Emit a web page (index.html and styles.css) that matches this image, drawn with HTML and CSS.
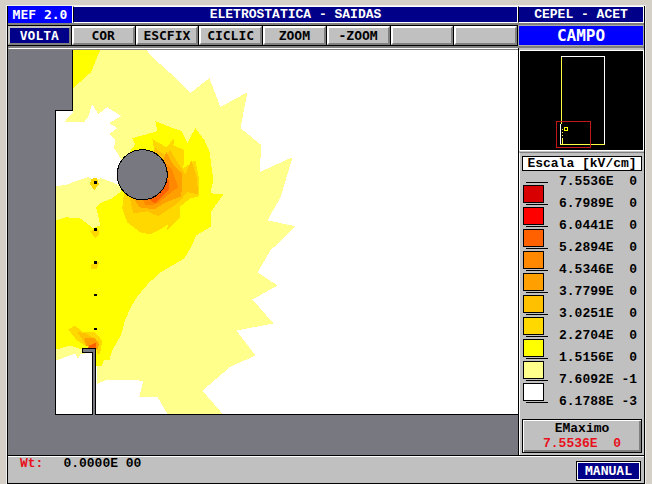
FILE: index.html
```html
<!DOCTYPE html>
<html lang="pt">
<head>
<meta charset="utf-8">
<title>MEF 2.0</title>
<link rel="stylesheet" href="styles.css">
</head>
<body>
<main class="app">
  <header class="header">
    <div class="brand">MEF 2.0</div>
    <h1 class="title">ELETROSTATICA - SAIDAS</h1>
    <div class="owner">CEPEL - ACET</div>
  </header>
  <div class="bar">
    <nav class="tools" aria-label="Menu">
      <button class="tool tool-active" type="button">VOLTA</button>
      <button class="tool" type="button">COR</button>
      <button class="tool" type="button">ESCFIX</button>
      <button class="tool" type="button">CICLIC</button>
      <button class="tool" type="button">ZOOM</button>
      <button class="tool" type="button">-ZOOM</button>
      <button class="tool" type="button"></button>
      <button class="tool" type="button"></button>
    </nav>
    <h2 class="mode">CAMPO</h2>
  </div>
  <div class="work">
    <section class="plot">
      <svg class="field" viewBox="9 50 508 404" shape-rendering="crispEdges">
        <rect x="9" y="50" width="508" height="404" fill="#787880"/>
        <path fill="#fff" d="M73 50H517V413H56V111H73Z"/>
        <path fill="#ffff8c" d="M73 50H146L152 57 172 75 190 93 209 78 220 107 247 92 240 128 261 145 259 172 292 157 280 197 267 220 295 226 270 250 257 272 277 285 252 299 273 323 236 330 255 355 230 366 202 390 222 413H167L157 396 139 396 143 380 107 379 97 383V351H93L80 354 78 358 75 353 56 360V186L68 184 75 181 88 177 95 180 101 178 112 182 118 185 125 165 119 156 114 148 115 139 109 134 117 128 109 123 121 116 107 107 98 114 92 104 88 117 84 122 64 122 73 112Z"/>
        <path fill="#ff0" d="M73 50H100L91 72 73 88ZM130 151L135 144 132 138 147 134 157 131 155 121 170 127 181 131 187 143 195 128 204 140 209 151 213 180 210 193 223 194 211 211V226L196 235 191 246 184 258 172 265 160 272 148 283 137 296 131 306 125 319 121 334 112 350 109 360 104 359 101 366 96 365V349H82L70 345 56 349V220L66 217 80 218 88 224 93 228 100 225 98 215 96 207 100 203 112 198 121 191Z"/>
        <path fill="#ffd800" d="M124 190L122 208 127 222 140 232 150 234 160 229 168 224 166 231 180 217V206L190 198 199 196V180L195 160 183 168 184 150 173 145 174 138 166 147 152 139 154 150ZM91 179L96 177 99 184 94 190 90 184ZM90 231L98 228 99 234 95 238ZM91 264L99 261 97 268 91 269ZM68 329L75 325 82 331 95 332 102 340 100 353 97 354V347L85 345 77 340Z"/>
        <path fill="#ffc000" d="M129 195L133 213 147 211 158 216 177 203 187 192 198 194 196 175 191 160 185 174 174 157 170 149 166 156 155 148ZM77 331L86 333 99 341 97 350 86 345Z"/>
        <path fill="#ffa000" d="M132 195L139 207 154 209 166 202 181 196 182 174 172 163 166 151 162 163ZM84 338L94 337 99 344 97 349 86 345Z"/>
        <path fill="#ff8800" d="M142 197L145 205 156 204 171 192 178 187 171 168 164 162Z"/>
        <path fill="#ff6000" d="M147 198L155 203 160 198 169 189 168 178ZM89 345L96 342 96 347H88Z"/>
        <path fill="#000" d="M94 181h3v3h-3zM94 228h3v3h-3zM94 261h3v3h-3zM94 294h3v2h-3zM94 327h3v2h-3z"/>
        <circle cx="142" cy="174.500" r="25" fill="#787880" stroke="#000"/>
        <path fill="none" stroke="#000" d="M72.500 50V110.500H55.500V413.500H92.500V351.500H82.500V347.500H95.500V413.500H517"/>
        <path fill="#787880" d="M83 348H95V414H93V351H83Z"/>
      </svg>
    </section>
    <aside class="side">
      <svg class="map" viewBox="520 51 123 99" shape-rendering="crispEdges">
        <path fill="none" stroke="#fff" d="M561 56.500H604.500V144.500M560.500 124V144"/>
        <path fill="none" stroke="#ff4" d="M561.500 57V124M560 144.500H605M562.500 139V144"/>
        <path fill="none" stroke="#ff4" stroke-dasharray="1 2" d="M562.500 129V139"/>
        <rect x="564.500" y="127.500" width="3" height="3" fill="none" stroke="#ff0"/>
        <rect x="556.500" y="121.500" width="34" height="26" fill="none" stroke="#c01818"/>
      </svg>
      <section class="scale">
        <h3 class="scale-title">Escala [kV/cm]</h3>
        <div class="legend">
          <div class="keys">
            <i class="tick"></i><i class="swatch c1"></i>
            <i class="tick"></i><i class="swatch c2"></i>
            <i class="tick"></i><i class="swatch c3"></i>
            <i class="tick"></i><i class="swatch c4"></i>
            <i class="tick"></i><i class="swatch c5"></i>
            <i class="tick"></i><i class="swatch c6"></i>
            <i class="tick"></i><i class="swatch c7"></i>
            <i class="tick"></i><i class="swatch c8"></i>
            <i class="tick"></i><i class="swatch c9"></i>
            <i class="tick"></i><i class="swatch c10"></i>
            <i class="tick"></i>
          </div>
          <ol class="values">
            <li>7.5536E  0</li>
            <li>6.7989E  0</li>
            <li>6.0441E  0</li>
            <li>5.2894E  0</li>
            <li>4.5346E  0</li>
            <li>3.7799E  0</li>
            <li>3.0251E  0</li>
            <li>2.2704E  0</li>
            <li>1.5156E  0</li>
            <li>7.6092E -1</li>
            <li>6.1788E -3</li>
          </ol>
        </div>
        <div class="maximum">
          <span>EMaximo</span>
          <output class="maximum-value">7.5536E  0</output>
        </div>
      </section>
    </aside>
  </div>
  <footer class="status">
    <p class="readout"><span class="readout-name">Wt:</span><span>0.0000E 00</span></p>
    <button class="manual" type="button">MANUAL</button>
  </footer>
</main>
</body>
</html>
```
FILE: styles.css
```css
* { box-sizing: border-box; }

body {
  margin: 0;
  padding: 6px 7px 0;
  background: #d4d0c8;
  color: #000;
  font: bold 13px/16px "Liberation Mono", monospace;
}

h1, h2, h3, p, ol { margin: 0; padding: 0; font: inherit; list-style: none; }
svg { display: block; width: 100%; }

button {
  margin: 0;
  padding: 0;
  border-radius: 0;
  font: bold 13px/16px "DejaVu Sans Mono", monospace;
}

.app {
  border: 1px solid #000;
  border-top: 0;
  background: #c0c0c0;
  outline: 1px solid #eee;
}

.header,
.bar,
.work {
  display: grid;
  grid-template-columns: minmax(0, 1fr) 126px;
}

.header {
  grid-template-columns: 65px minmax(0, 1fr) 126px;
  border-bottom: 2px solid #808080;
  text-align: center;
}

.brand {
  border-right: 1px solid #fff;
  background: #00f;
  color: #fff;
  font: bold 13px/17px "DejaVu Sans Mono", monospace;
}

.title,
.owner {
  height: 17px;
  border: 1px solid #fff;
  border-left-color: #000;
  background: #000088;
  color: #fff;
}

.tools {
  display: flex;
  height: 21px;
  background: #000;
  padding: 1px 1px 1px 0;
  gap: 1px;
}

.tool {
  flex: 1;
  min-width: 0;
  border: 2px solid;
  border-color: #fff #808080 #808080 #fff;
  background: #c0c0c0;
  color: #000;
}

.tool-active {
  border-color: #c0c0c0 #808080 #808080 #c0c0c0;
  background: #000088;
  color: #fff;
}

.mode {
  border: 1px solid #aaa;
  background: #00f;
  color: #fff;
  text-align: center;
  font: bold 16px/19px "DejaVu Sans Mono", monospace;
}

.work {
  border-top: 2px solid #808080;
  border-bottom: 1px solid #000;
}

.plot {
  border-top: 1px solid #fff;
  border-left: 1px solid #808080;
  background: #787880;
}

.field {
  border-top: 1px solid #808080;
}

.side {
  display: flex;
  flex-direction: column;
  border-left: 1px solid #000;
}

.map {
  margin-top: 2px;
  border: 1px solid #fff;
  background: #000;
}

.scale {
  display: flex;
  flex: 1;
  flex-direction: column;
  margin-top: 1px;
  padding: 3px 2px 2px;
  border-top: 1px solid #808080;
  border-left: 1px solid #fff;
}

.scale-title {
  border: 1px solid #000;
  background: #fff;
  line-height: 13px;
  text-align: center;
}

.legend {
  display: flex;
  justify-content: space-between;
  padding: 0 5px 0 1px;
}

.keys { padding-top: 11px; }

.tick,
.swatch { display: block; }

.tick {
  width: 22px;
  height: 1px;
  margin-left: 3px;
  background: #000;
}

.swatch {
  width: 21px;
  height: 18px;
  margin: 2px 0 1px;
  border: 1px solid #000;
}

.c1 { background: #d80000; }
.c2 { background: #f00; }
.c3 { background: #ff6000; }
.c4 { background: #ff8800; }
.c5 { background: #ffa000; }
.c6 { background: #ffc000; }
.c7 { background: #ffd800; }
.c8 { background: #ff0; }
.c9 { background: #ffff8c; }
.c10 { background: #fff; }

.values { line-height: 22px; }

.values li,
.maximum-value { white-space: pre; }

.maximum {
  display: flex;
  flex-direction: column;
  align-items: center;
  margin-top: auto;
  border: 1px solid #000;
  box-shadow: inset 1px 1px #fff, inset -2px -2px #808080;
  padding: 1px 0;
  line-height: 15px;
}

.maximum-value,
.readout-name { color: #e8101c; }

.status {
  display: flex;
  align-items: flex-start;
  justify-content: space-between;
  padding: 4px 3px 2px 12px;
  border-top: 1px solid #fff;
}

.readout {
  display: flex;
  gap: 20px;
  line-height: 5px;
}

.manual {
  width: 65px;
  height: 20px;
  border: 1px solid #000;
  outline: 1px solid #fff;
  outline-offset: -2px;
  background: #000088;
  color: #fff;
}
```
